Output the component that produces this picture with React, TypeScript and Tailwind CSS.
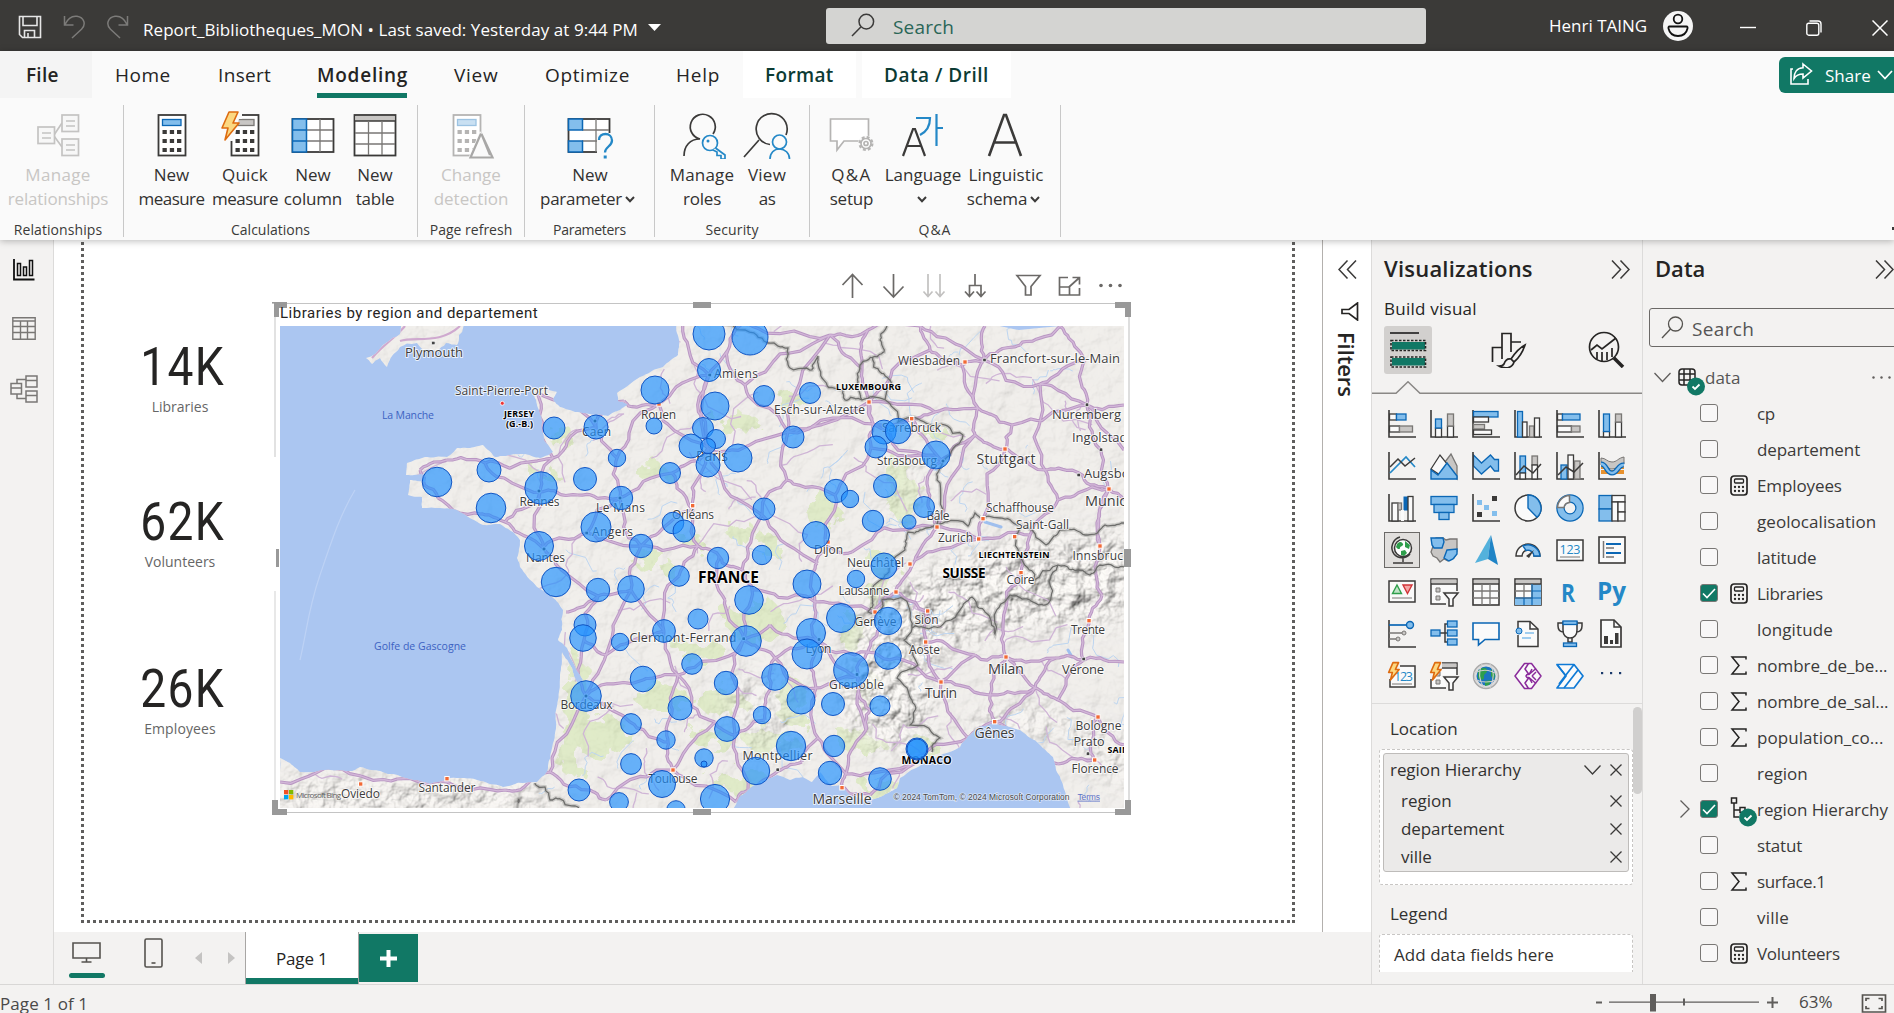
import React, { useLayoutEffect, useRef } from "react";

const DARK = "#3b3a39";
const BLUE = "#83beec";
const BLUE_LINE = "#0b67b5";
const GRAY = "#c8c6c4";
const GRAY_LINE = "#797775";
const GREEN = "#117865";

/* Text run that is tracked to an exact width. */
function Fit({ w, className = "", children }: { w: number; className?: string; children: string }) {
  const ref = useRef<HTMLSpanElement>(null);
  useLayoutEffect(() => {
    const el = ref.current;
    if (!el) return;
    el.style.letterSpacing = "0px";
    const natural = el.offsetWidth;
    el.style.letterSpacing = `${(w - natural) / children.length}px`;
  }, [w, children]);
  return (
    <span ref={ref} className={`inline-block whitespace-pre ${className}`}>
      {children}
    </span>
  );
}

/* ---------- title bar ---------- */

function TitleBar() {
  return (
    <header className="flex h-[51px] shrink-0 bg-[#3b3a38] text-white">
      <svg className="ml-[18px] mt-[15px] h-6 w-6 shrink-0" viewBox="0 0 24 24" fill="none" stroke="#e6e6e6" strokeWidth="1.6">
        <path d="M1.5 1.5h21v21H4.5l-3-3z" />
        <path d="M5 1.5v9h14v-9M6.500 22.500v-7h10v7M10 22v-4" />
      </svg>
      <svg className="ml-[21px] mt-[15px] h-6 w-6 shrink-0" viewBox="0 0 24 24" fill="none" stroke="#7c7b79" strokeWidth="1.500">
        <path d="M1.500 1v9h9M2 9.500C5 3 10 .8 14 1.300c7 1 9.500 8 4.500 13L9 23" />
      </svg>
      <svg className="ml-[20px] mt-[15px] h-6 w-6 shrink-0" viewBox="0 0 24 24" fill="none" stroke="#7c7b79" strokeWidth="1.500">
        <path d="M20.500 1v9h-9M20 9.500C17 3 12 .8 8 1.300c-7 1-9.500 8-4.500 13L13 23" />
      </svg>
      <div className="ml-[12px] mt-[18px] w-[496px] text-[17px] leading-6">
        <Fit w={495}>Report_Bibliotheques_MON • Last saved: Yesterday at 9:44 PM</Fit>
      </div>
      <svg className="ml-[9px] mt-[24px] h-[7px] w-[13px] shrink-0" viewBox="0 0 13 7"><path d="M0 0h13L6.500 7z" fill="#fff" /></svg>
      <div className="ml-[165px] mt-[8px] flex h-9 w-[600px] rounded-[3px] bg-[#d4d4d2]">
        <svg className="ml-[25px] mt-[5px] h-6 w-6" viewBox="0 0 24 24" fill="none" stroke="#3b3a39" strokeWidth="1.500">
          <circle cx="15.300" cy="8.600" r="7.300" /><path d="M9.800 14 1 23" />
        </svg>
        <div className="ml-[18px] mt-[7px] text-[19px] leading-6 text-[#2a6657]"><Fit w={61}>Search</Fit></div>
      </div>
      <div className="ml-[123px] mt-[14px] w-[99px] text-[17px] leading-6"><Fit w={98}>Henri TAING</Fit></div>
      <svg className="ml-[15px] mt-[11px] h-[30px] w-[30px]" viewBox="0 0 30 30" fill="none" stroke="#111" strokeWidth="1.800">
        <circle cx="15" cy="15" r="15" fill="#f5f5f5" stroke="none" />
        <circle cx="15" cy="8" r="4.300" /><path d="M6.500 15.500h17c1 0 1.200 1 1 2-1 4.500-4.500 7.500-9.500 7.500s-8.500-3-9.500-7.500c-.2-1 0-2 1-2z" />
      </svg>
      <svg className="ml-[47px] mt-[20px] h-4 w-4" viewBox="0 0 16 16"><path d="M0 7.500h16" stroke="#fff" strokeWidth="1.400" /></svg>
      <svg className="ml-[50px] mt-[20px] h-4 w-4" viewBox="0 0 16 16" fill="none" stroke="#fff" strokeWidth="1.400">
        <rect x=".8" y="3.200" width="12" height="12" rx="2" /><path d="M3.500 1h8.500a3 3 0 0 1 3 3v8.500" />
      </svg>
      <svg className="ml-[50px] mt-[20px] h-4 w-4" viewBox="0 0 16 16"><path d="m.5.5 15 15m0-15-15 15" stroke="#fff" strokeWidth="1.500" /></svg>
    </header>
  );
}

/* ---------- ribbon ---------- */

function RibbonTabs() {
  const tab = "shrink-0 text-[19px] leading-[49px] text-[#252423]";
  return (
    <nav className="flex h-[47px]">
      <div className={`${tab} w-[92px] bg-[#f4f4f4] pl-[26px] font-semibold`}><Fit w={33}>File</Fit></div>
      <div className={`${tab} w-[103px] pl-[23px]`}><Fit w={56}>Home</Fit></div>
      <div className={`${tab} w-[122px] pl-[23px]`}><Fit w={53}>Insert</Fit></div>
      <div className="w-[90px] shrink-0 border-b-[5px] border-[#117865] text-[19px] font-semibold leading-[49px] text-[#252423]"><Fit w={91}>Modeling</Fit></div>
      <div className={`${tab} w-[138px] pl-[47px]`}><Fit w={45}>View</Fit></div>
      <div className={`${tab} w-[131px]`}><Fit w={85}>Optimize</Fit></div>
      <div className={`${tab} w-[67px]`}><Fit w={44}>Help</Fit></div>
      <div className="w-[113px] shrink-0 bg-white pl-[22px] text-[19px] font-semibold leading-[49px] text-[#0c3b34]"><Fit w={69}>Format</Fit></div>
      <div className="ml-[6px] w-[149px] shrink-0 bg-white pl-[22px] text-[19px] font-semibold leading-[49px] text-[#0c3b34]"><Fit w={105}>Data / Drill</Fit></div>
      <div className="ml-[768px] mt-[6px] flex h-9 w-[115px] shrink-0 rounded-l-md bg-[#117865] text-white">
        <svg className="ml-[10px] mt-[5px] h-6 w-6 shrink-0" viewBox="0 0 24 24" fill="none" stroke="#fff" strokeWidth="1.600">
          <path d="M4 7H2v15h17v-5M14 2l8.500 7L14 16v-4c-4 0-7 1.500-9 4.500 0-6 3-10.500 9-10.800z" />
        </svg>
        <div className="ml-[12px] mt-[7px] shrink-0 text-[17px] leading-6"><Fit w={46}>Share</Fit></div>
        <svg className="ml-[6px] mt-[13px] h-[10px] w-[16px] shrink-0" viewBox="0 0 16 10" fill="none" stroke="#fff" strokeWidth="1.700"><path d="m1 1 7 7.500L15 1" /></svg>
      </div>
    </nav>
  );
}

function Chev() {
  return <svg className="ml-[3px] mr-[5px] inline-block h-[7px] w-[10px]" viewBox="0 0 10 7" fill="none" stroke="#3b3a39" strokeWidth="2"><path d="m1 1 4 4.200L9 1" /></svg>;
}

function CalcIcon({ faded = false, dx = 0, gray = false }: { faded?: boolean; dx?: number; gray?: boolean }) {
  const d = faded ? "#b5b4b3" : DARK;
  return (
    <g transform={`translate(${dx} 0)`}>
      <rect x="10.500" y="4" width="27" height="40.500" fill="#fff" stroke={d} strokeWidth="1.800" />
      <rect x="14.500" y="8.500" width="18.500" height="6" fill={gray ? GRAY : faded ? "#c9e0f2" : BLUE} stroke={gray ? GRAY_LINE : faded ? "#9cc3e2" : BLUE_LINE} strokeWidth="1.300" />
      {[19, 28, 37].map((y) => [14.5, 21.8, 29].map((x) => <rect key={`${x}${y}`} x={x} y={y} width="4.300" height="4" fill={d} />))}
    </g>
  );
}

function Bolt({ s = 1 }: { s?: number }) {
  return <path transform={`scale(${s})`} d="M8 1h9l-5 11h6L4 29l3-12H1z" fill="#fcd881" stroke="#dd6b10" strokeWidth={1.6 / s} strokeLinejoin="round" />;
}

type Btn = { width: string; icon: React.ReactNode; a: [string, number]; b?: [string, number]; chev?: boolean; off?: boolean };

const groups: { width: string; label: [string, number]; pad: string; labelPad?: string; buttons: Btn[] }[] = [
  {
    width: "w-[123px]", label: ["Relationships", 88], pad: "pl-[3px]", labelPad: "pr-[7px]",
    buttons: [{
      width: "w-[110px]", off: true, a: ["Manage", 65], b: ["relationships", 101],
      icon: <g fill="#f7f7f7" stroke="#c4c3c2" strokeWidth="1.700">
        <path d="M20 24 28 12M20 25l8 11" /><rect x="4" y="16" width="16.500" height="16.500" /><rect x="28" y="4" width="16.500" height="16.500" /><rect x="28" y="28" width="16.500" height="16.500" />
        <path d="M8 22h9M8 27h9M32 10h9M32 15h9M32 34h9M32 39h9" /></g>,
    }],
  },
  {
    width: "w-[293px]", label: ["Calculations", 79], pad: "pl-[11px]",
    buttons: [
      { width: "w-[73px]", a: ["New", 36], b: ["measure", 66], icon: <CalcIcon /> },
      { width: "w-[74px]", a: ["Quick", 46], b: ["measure", 66], icon: <><CalcIcon dx={0} gray /><path d="M9 0h12v8h-3l-6 22H6V18z" fill="#fafafa" /><Bolt /></> },
      {
        width: "w-[62px]", a: ["New", 36], b: ["column", 58],
        icon: <g fill="none"><rect x="3.500" y="8" width="41" height="33" fill="#fff" stroke={DARK} strokeWidth="1.800" /><path d="M17 19h27M17 30h27M31 8v33" stroke={GRAY_LINE} strokeWidth="1.300" /><rect x="3.500" y="8" width="14" height="33" fill={BLUE} /><path d="M3.500 8h14v33h-14zM3.500 19h14M3.500 30h14" stroke={BLUE_LINE} strokeWidth="1.500" /></g>,
      },
      {
        width: "w-[62px]", a: ["New", 36], b: ["table", 39],
        icon: <g fill="none"><rect x="3.500" y="4" width="41" height="40.500" fill="#fff" stroke={DARK} strokeWidth="1.800" /><rect x="4.300" y="5" width="39.400" height="5" fill={GRAY} /><path d="M4 10h40" stroke={DARK} strokeWidth="1.500" /><path d="M4 22h40M4 33h40M17.500 10v34M31 10v34" stroke={GRAY_LINE} strokeWidth="1.300" /></g>,
      },
    ],
  },
  {
    width: "w-[106px]", label: ["Page refresh", 82], pad: "pl-[9px]",
    buttons: [{ width: "w-[88px]", off: true, a: ["Change", 60], b: ["detection", 75], icon: <><CalcIcon faded dx={-4} /><path d="M33 20 21 48h27z" fill="#fafafa" /><path d="M34 22.500 23.500 46.500h22L34.500 23l8.500 21" fill="#fafafa" stroke="#a8a7a6" strokeWidth="2.200" /></> }],
  },
  {
    width: "w-[129px]", label: ["Parameters", 73], pad: "pl-[11px]",
    buttons: [{
      width: "w-[108px]", chev: true, a: ["New", 36], b: ["parameter", 82],
      icon: <g fill="none"><rect x="2.500" y="8" width="41" height="33" fill="#fff" stroke={DARK} strokeWidth="1.800" /><path d="M16 19h27M16 30h27M30 8v33" stroke={GRAY_LINE} strokeWidth="1.300" /><path d="M2.500 8h14v11h-14zM2.500 30h14v11h-14z" fill={BLUE} stroke={BLUE_LINE} strokeWidth="1.500" /><path d="M31 22h18v26H31z" fill="#fafafa" /><path d="M33 29c0-4 3-6 6.500-6s6.500 2.500 6.500 6.500c0 6-7 6-7 12" stroke="#2488c7" strokeWidth="2.300" /><rect x="37.700" y="44.500" width="3" height="3" fill="#2488c7" /></g>,
    }],
  },
  {
    width: "w-[154px]", label: ["Security", 53], pad: "pl-[10px]",
    buttons: [
      {
        width: "w-[74px]", a: ["Manage", 64], b: ["roles", 38],
        icon: <g fill="none" strokeWidth="1.700"><path d="M35 23A12.500 12.500 0 1 0 22 28C12 28 6 35 6 45" stroke={DARK} /><circle cx="32" cy="32" r="7.500" fill="#fafafa" stroke="#2488c7" /><path d="m37.500 37 9.500 7v4h-4v-3.500h-4V41l-4-2" stroke="#2488c7" fill="#fafafa" /><circle cx="30" cy="30" r="1.500" fill="#2488c7" /></g>,
      },
      {
        width: "w-[56px]", a: ["View", 38], b: ["as", 17],
        icon: <g fill="none" strokeWidth="1.700"><path d="M43 24A15.500 15.500 0 1 0 27 33.500M16 29 1 46" stroke={DARK} /><circle cx="36.500" cy="31" r="7" fill="#fafafa" stroke="#2488c7" /><path d="M27 48c0-6 4-10 9.500-10S46.500 42 46.500 48" stroke="#2488c7" /></g>,
      },
    ],
  },
  {
    width: "w-[250px]", label: ["Q&A", 33], pad: "pl-[13px]",
    buttons: [
      {
        width: "w-[57px]", a: ["Q&A", 40], b: ["setup", 44],
        icon: <g fill="#fff" stroke="#b5b4b3" strokeWidth="1.700"><path d="M2.500 8h38v22H16l-7 9v-9H2.500z" /><circle cx="38" cy="32.500" r="8" fill="#fafafa" stroke="none" /><circle cx="38" cy="32.500" r="6" strokeWidth="3" strokeDasharray="2.700 2" /><circle cx="38" cy="32.500" r="5" /><circle cx="38" cy="32.500" r="2" /></g>,
      },
      {
        width: "w-[86px]", chev: true, a: ["Language", 77],
        icon: <g fill="none"><path d="m4 45 10-27h2l10 27M8 35h14" stroke={DARK} strokeWidth="2.200" /><path d="M17 7h14c0 8-4 14-10 17M37.500 3v32M37.500 17H44" stroke="#2488c7" strokeWidth="2.200" /></g>,
      },
      {
        width: "w-[80px]", chev: true, a: ["Linguistic", 75], b: ["schema", 60],
        icon: <g fill="none" stroke={DARK} strokeWidth="2.600"><path d="M7 45 22 4h2l15 41M12.500 31.500h21" /></g>,
      },
    ],
  },
];

function Ribbon() {
  return (
    <div className="relative z-10 h-[189px] shrink-0 bg-[#fafafa] shadow-[0_1px_7px_rgba(0,0,0,0.28)]">
      <RibbonTabs />
      <div className="flex h-[142px]">
        {groups.map((g) => (
          <React.Fragment key={g.label[0]}>
            <div className={`${g.width} flex shrink-0 flex-col`}>
              <div className={`flex h-[122px] pt-[13px] ${g.pad}`}>
                {g.buttons.map((b, i) => (
                  <div key={i} className={`${b.width} flex shrink-0 flex-col items-center text-[17px] leading-6 ${b.off ? "text-[#c8c6c4]" : "text-[#323130]"}`}>
                    <svg className="mb-[4px] h-12 w-[50px] shrink-0" viewBox="-1 0 50 48">{b.icon}</svg>
                    <Fit w={b.a[1]}>{b.a[0]}</Fit>
                    <div className="flex h-6 items-center">
                      {b.b && <Fit w={b.b[1]}>{b.b[0]}</Fit>}
                      {b.chev && <Chev />}
                    </div>
                  </div>
                ))}
              </div>
              <div className={`text-center text-[14px] leading-[19px] text-[#3b3a39] ${g.labelPad ?? ""}`}><Fit w={g.label[1]}>{g.label[0]}</Fit></div>
            </div>
            <div className="mt-[7px] h-[132px] w-px shrink-0 bg-[#c8c8c8]" />
          </React.Fragment>
        ))}
        <div className="ml-auto mt-[129px] h-[3px] w-[2px] bg-[#3b3a39]" />
      </div>
    </div>
  );
}

/* ---------- left rail ---------- */

function LeftRail() {
  return (
    <aside className="w-[54px] shrink-0 border-r border-[#dcdbda] bg-[#f3f2f1]">
      <svg className="ml-[13px] mt-[19px] h-[22px] w-[22px]" viewBox="0 0 22 22" fill="none" stroke="#111" strokeWidth="1.500">
        <path d="M1 0v20.500h20.500" strokeWidth="1.800" /><rect x="4.500" y="4.500" width="3" height="12" /><rect x="10.500" y="8" width="3" height="8.500" /><rect x="16.500" y="1.500" width="3" height="15" />
      </svg>
      <svg className="ml-[12px] mt-[36px] h-6 w-6" viewBox="0 0 24 24" fill="none" stroke="#797775" strokeWidth="1.400">
        <path d="M.8.8h22.400v21.400H.8zM1 4h22M1 9.500h22M1 15.500h22M8.500 4v18M15.500 4v18" />
      </svg>
      <svg className="ml-[10px] mt-[34px] h-7 w-7" viewBox="0 0 28 28" fill="none" stroke="#797775" strokeWidth="1.500">
        <path d="M1 8.500h10.500V19H1zM1 13h10M16 1h11v11H16zM16 5.500h11M16 16h11v11H16zM16 20.500h11M7 8.500V4.500h9M7 19v4.500h9" />
      </svg>
    </aside>
  );
}

/* ---------- map ---------- */

type P = [number, number];

const C: Record<string, P> = {
  paris: [708, 448], lille: [744, 322], calais: [682, 322], amiens: [709, 375], rouen: [659, 404], havre: [624, 401], caen: [596, 427], rennes: [540, 492],
  nantes: [543, 548], lemans: [620, 498], angers: [587, 533], tours: [641, 546], orleans: [693, 510], brest: [420, 470], quimper: [438, 498],
  lorient: [480, 514], vannes: [505, 522], brieuc: [485, 463], morlaix: [447, 460], avranches: [553, 458], laval: [578, 495], chartres: [672, 473], alencon: [617, 458], poitiers: [631, 590],
  niort: [598, 596], rochelle: [566, 612], saintes: [584, 640], bordeaux: [586, 696], bayonne: [550, 772], pau: [588, 790], tarbes: [606, 800],
  toulouse: [673, 770], montauban: [668, 742], agen: [630, 722], cahors: [672, 712], brive: [678, 675], limoges: [664, 631], chatx: [679, 576],
  vierzon: [698, 546], bourges: [719, 556], clermont: [744, 639], perigueux: [643, 680], stetienne: [775, 658], roanne: [770, 625], lyon: [817, 640], macon: [815, 602],
  beaune: [817, 563], dijon: [828, 547], auxerre: [762, 515], troyes: [787, 480], reims: [788, 432], arras: [728, 350], quentin: [745, 385], metz: [873, 424], nancy: [871, 448], chaumont: [835, 495],
  strasb: [941, 460], colmar: [928, 488], bale: [937, 527], besancon: [852, 552], geneve: [875, 612], annecy: [880, 628], chambery: [868, 652],
  grenoble: [857, 676], valence: [816, 688], orange: [818, 738], nimes: [802, 762], montp: [778, 771], narbonne: [736, 802], marseille: [842, 786],
  aix: [846, 774], toulon: [870, 795], nice: [917, 762], sisteron: [866, 730], gap: [870, 710], savona: [968, 738], genes: [995, 722], turin: [941, 682], milan: [1006, 657], tortona: [990, 695], piacenza: [1035, 688],
  parma: [1058, 700], bologne: [1098, 717], florence: [1094, 760], livorno: [1058, 764], rimini: [1124, 745], verone: [1084, 660], brescia: [1056, 658], trente: [1089, 621], bolzano: [1102, 595],
  innsb: [1100, 546], munich: [1109, 489], augsb: [1079, 473], ulm: [1045, 470], stuttgart: [1005, 449], karls: [975, 435], mann: [978, 408],
  francf: [984, 360], mainz: [962, 365], wurz: [1040, 384], nurem: [1087, 405], kaisers: [935, 412], sarre: [912, 419], lux: [869, 402],
  liege: [868, 330], namur: [830, 335], bastogne: [862, 368], koln: [920, 326], koblenz: [930, 350], zurich: [979, 539], berne: [915, 560], lausanne: [896, 592], sion: [928, 611],
  aoste: [926, 642], novara: [975, 655], bregenz: [1030, 535], coire: [1021, 572], lugano: [1003, 625], memm: [1058, 500], padoue: [1124, 662],
  ingol: [1101, 450], east1: [1124, 405], east2: [1124, 500], east3: [1124, 450], schaff: [983, 519], rodez: [715, 722], beziers: [748, 790], millau: [735, 735], puy: [770, 690], montlucon: [725, 600], moulins: [752, 590],
  nevers: [742, 570], cherb: [537, 392], oviedo: [361, 776], gijon: [364, 768], sant: [447, 782], bilbao: [505, 790], w: [280, 782], ang: [606, 655], mende: [765, 720], heil: [1012, 425], saale: [1060, 326], bamberg: [1085, 360], north1: [985, 326], fulda: [1020, 345],
};

const roads = `calais-amiens amiens-rouen lille-arras arras-quentin arras-paris quentin-reims amiens-paris rouen-paris havre-rouen caen-havre caen-avranches avranches-rennes avranches-brieuc brieuc-morlaix morlaix-brest brest-quimper quimper-lorient lorient-vannes vannes-nantes rennes-brieuc rennes-vannes rennes-nantes rennes-laval laval-lemans lemans-chartres chartres-paris lemans-alencon alencon-caen alencon-rouen lemans-tours lemans-angers angers-nantes angers-tours tours-orleans orleans-paris orleans-chartres tours-poitiers poitiers-niort niort-rochelle niort-saintes niort-nantes saintes-bordeaux bordeaux-bayonne bordeaux-agen agen-montauban montauban-toulouse bayonne-pau pau-tarbes tarbes-toulouse toulouse-narbonne montauban-cahors cahors-brive brive-limoges limoges-chatx chatx-vierzon vierzon-orleans vierzon-bourges bourges-montlucon montlucon-clermont tours-vierzon limoges-poitiers bordeaux-perigueux perigueux-brive brive-clermont clermont-roanne clermont-stetienne stetienne-lyon roanne-lyon lyon-macon macon-beaune beaune-dijon beaune-auxerre auxerre-paris auxerre-troyes troyes-reims troyes-chaumont chaumont-dijon paris-reims reims-metz metz-nancy nancy-chaumont metz-strasb strasb-colmar colmar-bale nancy-strasb dijon-besancon besancon-bale macon-geneve geneve-annecy annecy-chambery chambery-lyon chambery-grenoble grenoble-lyon grenoble-valence lyon-valence valence-orange orange-nimes nimes-montp montp-beziers beziers-narbonne orange-aix aix-marseille aix-nice marseille-toulon toulon-nice aix-sisteron sisteron-gap gap-grenoble nice-savona savona-genes savona-turin genes-tortona tortona-milan tortona-turin tortona-piacenza turin-novara novara-milan milan-piacenza piacenza-parma parma-bologne bologne-florence florence-livorno livorno-genes bologne-rimini milan-brescia brescia-verone verone-trente trente-bolzano bolzano-innsb innsb-munich verone-padoue verone-parma brescia-piacenza munich-augsb augsb-ulm ulm-stuttgart stuttgart-karls karls-mann mann-francf mann-heil heil-stuttgart heil-nurem francf-wurz wurz-nurem nurem-ingol ingol-munich wurz-ulm ulm-memm memm-munich memm-bregenz bregenz-coire coire-lugano lugano-milan bregenz-zurich zurich-schaff schaff-stuttgart zurich-bale zurich-berne bale-berne berne-lausanne lausanne-geneve lausanne-sion sion-aoste aoste-turin chambery-turin mainz-francf mainz-mann mainz-koblenz koblenz-koln koblenz-lux mann-kaisers kaisers-sarre sarre-metz sarre-strasb karls-strasb karls-bale lux-metz lux-bastogne bastogne-liege bastogne-namur namur-liege liege-koln koln-francf namur-reims lille-namur nurem-east1 munich-east2 munich-innsb wurz-bamberg bamberg-nurem bamberg-saale francf-fulda francf-north1 fulda-saale clermont-millau millau-beziers rodez-toulouse rodez-millau rodez-brive stetienne-puy puy-mende mende-millau nevers-bourges nevers-moulins moulins-clermont moulins-macon nevers-auxerre cherb-avranches w-oviedo oviedo-sant sant-bilbao bilbao-bayonne saintes-ang ang-limoges ang-poitiers ang-bordeaux caen-cherb lux-kaisers metz-lux reims-lux grenoble-sisteron quentin-namur nurem-east3 genes-piacenza valence-stetienne aoste-novara`.split(" ");

function rng(seed: number) {
  let s = seed;
  return () => {
    s = (s * 16807) % 2147483647;
    return s / 2147483647 - 0.5;
  };
}

/* Breaks each straight segment into a wandering line. */
function wander(pts: P[], amount: number, seed: number, depth = 3): P[] {
  const r = rng(seed);
  let out = pts;
  for (let d = 0; d < depth; d++) {
    const next: P[] = [];
    for (let i = 0; i < out.length - 1; i++) {
      const [x1, y1] = out[i];
      const [x2, y2] = out[i + 1];
      const k = Math.hypot(x2 - x1, y2 - y1) * amount;
      next.push(out[i], [(x1 + x2) / 2 + r() * k, (y1 + y2) / 2 + r() * k]);
    }
    next.push(out[out.length - 1]);
    out = next;
  }
  return out;
}

const toPath = (pts: P[]) => "M" + pts.map((p) => `${p[0].toFixed(1)} ${p[1].toFixed(1)}`).join("L");

const roadPath = roads.map((r, i) => {
  const [a, b] = r.split("-");
  return toPath(wander([C[a], C[b]], 0.28, 77 + i * 131));
}).join("");

const minorPath = (() => {
  const r = rng(991);
  let d = "";
  for (let i = 0; i < 85; i++) {
    const x = 700 + r() * 800;
    const y = 567 + r() * 480;
    d += toPath(wander([[x, y], [x + r() * 130, y + r() * 110]], 0.4, 13 + i * 57));
  }
  return d;
})();

const riverPath = (() => {
  const r = rng(4242);
  let d = "";
  for (let i = 0; i < 95; i++) {
    const x = 830 + r() * 590;
    const y = 560 + r() * 470;
    d += toPath(wander([[x, y], [x + r() * 70, y + r() * 70]], 0.6, 29 + i * 91));
  }
  return d;
})();

const mainland: P[] = [
  [676, 320], [679, 340], [678, 355], [663, 367], [640, 377], [617, 393], [618, 401], [628, 404], [620, 410], [608, 416], [597, 415], [575, 412], [560, 407], [553, 400], [557, 392], [545, 389], [532, 387], [537, 405], [542, 420], [544, 440], [553, 452], [540, 458],
  [525, 454], [510, 455], [495, 457], [483, 445], [470, 448], [457, 448], [447, 457], [425, 457], [407, 463], [406, 475], [424, 474], [425, 482], [410, 480], [408, 495], [422, 497], [422, 508], [440, 508], [457, 510], [483, 525], [500, 524], [513, 532], [520, 540], [517, 558], [520, 567],
  [537, 587], [552, 597], [563, 610], [562, 630], [558, 640], [567, 648], [583, 680], [578, 685], [572, 668], [562, 652], [560, 675], [558, 700], [556, 722], [553, 743], [547, 772], [537, 782], [503, 787], [477, 780], [450, 778], [430, 784], [413, 780], [380, 771], [360, 767], [352, 771], [300, 772], [290, 763], [280, 758],
  [270, 820], [730, 820], [735, 806], [740, 796], [750, 788], [777, 775], [790, 780], [803, 777], [812, 782], [820, 772], [832, 786], [840, 785], [850, 795], [865, 800], [877, 798], [890, 792], [897, 788], [900, 778], [930, 760], [960, 747], [977, 728], [995, 723], [1020, 730], [1040, 745], [1053, 757], [1056, 770], [1063, 785], [1072, 812],
  [1140, 820], [1140, 320], [676, 320],
];
const england: P[] = [[405, 320], [400, 334], [383, 345], [366, 358], [372, 364], [380, 358], [387, 367], [392, 356], [400, 347], [417, 343], [423, 350], [437, 352], [446, 343], [457, 345], [459, 335], [466, 320], [405, 320]];
const mainlandPath = toPath(wander(mainland, 0.12, 5, 3)) + "z";
const englandPath = toPath(wander(england, 0.2, 9, 2)) + "z";

const borders: P[][] = [
  [[715, 320], [745, 330], [768, 343], [788, 348], [790, 368], [812, 370], [818, 356], [822, 378], [843, 390], [845, 400], [862, 400], [888, 402], [898, 422], [930, 425], [963, 435], [950, 455], [937, 480], [937, 525], [920, 530], [908, 532], [905, 550], [885, 575], [872, 592], [873, 605], [868, 612], [880, 613], [882, 600], [902, 598], [912, 628], [904, 640], [918, 665], [897, 678], [912, 700], [910, 725], [940, 738], [932, 752]],
  [[887, 326], [880, 340], [884, 352], [873, 357], [860, 365], [857, 385], [862, 400]], [[873, 357], [880, 372], [890, 380], [885, 400]],
  [[937, 525], [968, 526], [975, 513], [1000, 518], [1020, 525], [1046, 545], [1060, 530], [1085, 535], [1105, 525], [1124, 523]],
  [[912, 628], [940, 627], [960, 610], [972, 597], [985, 612], [995, 634], [1010, 595], [1030, 600], [1045, 605], [1050, 585], [1058, 565], [1078, 570], [1090, 575], [1100, 565], [1124, 567]],
  [[1020, 528], [1022, 560], [1035, 580], [1058, 565]],
  [[535, 783], [545, 787], [550, 800], [575, 806], [582, 812]],
];
const borderPath = borders.map((b, i) => toPath(wander(b, 0.35, 300 + i * 17, 3))).join("");

const greens: [number, number, number, number][] = [
  [575, 700, 10, 50], [600, 735, 28, 20], [568, 745, 12, 30], [900, 490, 14, 32], [735, 420, 22, 9], [650, 560, 18, 10], [700, 650, 25, 10], [740, 620, 16, 14], [765, 620, 16, 22], [660, 695, 30, 9], [720, 700, 25, 12], [770, 545, 10, 14], [820, 510, 12, 18],
  [880, 590, 10, 28], [850, 630, 10, 20], [870, 690, 12, 20], [790, 700, 16, 24], [770, 740, 26, 12], [740, 780, 30, 10], [860, 740, 24, 12], [880, 785, 20, 8], [920, 745, 16, 10], [540, 470, 14, 6], [560, 435, 10, 14], [690, 540, 12, 8], [930, 430, 16, 8], [740, 530, 16, 8], [650, 470, 16, 7], [790, 400, 14, 8], [880, 560, 16, 10], [710, 735, 22, 10],
];

const circles: [number, number, number][] = [
  [709, 334, 16], [709, 370, 11.5], [655, 390, 14], [715, 406, 14], [554, 428, 11], [596, 427, 12], [654, 426, 8], [703, 428, 10.5], [691, 446, 12], [617, 458, 8.7],
  [670, 473, 10.5], [708, 465, 12], [489, 470, 12], [437, 482, 14.8], [541, 488, 16.2], [491, 508, 14.8], [585, 479, 11.5], [621, 498, 11.7], [596, 527, 15], [539, 546, 14.5],
  [673, 523, 10.8], [684, 531, 11], [641, 546, 11.7], [750, 337, 18], [764, 396, 10.5], [810, 393, 10.5], [793, 437, 11], [738, 458, 14], [716, 439, 9.5], [708, 446, 7.5],
  [884, 432, 12], [898, 431, 12.7], [876, 447, 11], [936, 455, 14], [885, 486, 11.5], [836, 491, 11.7], [850, 499, 8.7], [764, 509, 11], [873, 521, 10.7], [909, 522, 7],
  [924, 507, 10.5], [816, 535, 13.5], [718, 558, 10.7], [762, 555, 9.7], [807, 584, 14], [884, 566, 13], [856, 579, 8.7], [749, 600, 14.3], [841, 618, 14.5], [888, 621, 13.7],
  [811, 633, 14.5], [807, 654, 15], [746, 641, 15.3], [888, 656, 13.3], [851, 670, 17.3], [726, 683, 11.7], [775, 677, 13.3], [801, 700, 14], [833, 704, 11.5], [880, 706, 10],
  [762, 715, 8.7], [727, 729, 12.4], [791, 746, 14.7], [834, 746, 10.7], [917, 749, 11], [917, 749, 10], [756, 771, 13.7], [830, 773, 11.7], [880, 779, 11.3], [715, 799, 14.6],
  [704, 758, 9.2], [704, 764, 3], [556, 582, 14.7], [598, 590, 11.7], [631, 589, 13.3], [679, 576, 10.3], [585, 625, 11], [583, 638, 13.3], [620, 642, 8.7], [664, 631, 11.4],
  [698, 619, 10], [692, 664, 10.3], [643, 679, 12.8], [586, 696, 15.3], [680, 708, 12], [631, 724, 10.4], [666, 740, 9.2], [631, 764, 10.4], [579, 790, 11], [619, 802, 9.4], [662, 784, 13.5], [676, 810, 9.3],
];

/* text, x, baseline, width, size */
const towns: [string, number, number, number, number][] = [
  ["Plymouth", 405, 357, 58, 13], ["Saint-Pierre-Port", 455, 394.7, 93, 12], ["Rouen", 641, 418.7, 35, 12], ["Caen", 582, 435.7, 29, 12], ["Paris", 696, 461, 32, 14], ["Rennes", 519.5, 505.7, 40, 12],
  ["Le Mans", 596, 511.7, 49, 12], ["Angers", 592, 536.3, 41, 12], ["Orléans", 672, 518.7, 42, 12], ["Nantes", 526, 562, 39, 12], ["Amiens", 714, 377.7, 44, 12], ["Esch-sur-Alzette", 774, 413.7, 91, 12],
  ["Wiesbaden", 898, 364.7, 62, 12], ["Francfort-sur-le-Main", 990, 362.7, 130, 13], ["Sarrebruck", 882, 432, 59, 12], ["Strasbourg", 877, 464.5, 60, 12], ["Nuremberg", 1052, 419, 69, 13], ["Ingolstadt", 1072, 441.7, 60, 13],
  ["Augsbourg", 1084, 477.7, 66, 13], ["Munich", 1085, 506, 50, 14.5], ["Stuttgart", 976.5, 464, 59, 14], ["Schaffhouse", 986, 512, 68, 12], ["Saint-Gall", 1016, 528.7, 53, 12], ["Bâle", 926.5, 519.7, 23, 12],
  ["Zurich", 938, 542, 35, 12], ["Dijon", 814, 554.3, 29, 12], ["Neuchâtel", 847, 566.7, 57, 12], ["Innsbruck", 1072.5, 560.3, 57, 12], ["Coire", 1006.5, 584, 28, 12], ["Lausanne", 838.5, 595, 51, 12],
  ["Genève", 854.5, 625.7, 42, 12], ["Sion", 914.5, 624, 24, 12], ["Aoste", 909, 653.7, 31, 12], ["Lyon", 805.5, 652.7, 26, 12.5], ["Clermont-Ferrand", 629.5, 642, 107, 12.5], ["Grenoble", 829, 688.7, 55, 12],
  ["Milan", 988, 674, 36, 14.5], ["Vérone", 1062, 673.7, 42, 13], ["Trente", 1071, 633.7, 34, 12], ["Turin", 925, 698, 32, 14], ["Gênes", 974.5, 738, 40, 14], ["Bologne", 1075.5, 730.3, 46, 12],
  ["Prato", 1073.5, 746, 31, 12.5], ["Florence", 1071.5, 773.3, 47, 12], ["Montpellier", 742.5, 760.3, 70, 12.5], ["Marseille", 812.5, 804, 59, 14], ["Toulouse", 648.5, 782.7, 49, 12], ["Bordeaux", 560.5, 709.3, 52, 12],
  ["Santander", 418.5, 792, 57, 12], ["Oviedo", 341, 798, 39, 12],
];
const countries: [string, number, number, number, number][] = [
  ["JERSEY", 504, 416.7, 30, 9], ["(G.-B.)", 506, 427, 27, 9], ["LUXEMBOURG", 836, 390, 65, 9], ["FRANCE", 698, 582.5, 61, 15.5], ["SUISSE", 942.5, 577.7, 43, 13.5],
  ["LIECHTENSTEIN", 978.5, 557.7, 71, 9], ["MONACO", 901.5, 764, 50, 10.5], ["SAINT", 1107.5, 752.5, 27, 9],
];
const capitals: P[] = [[659, 404], [692.7, 505.7], [869, 402], [965, 362], [911.7, 418.7], [1109, 489], [1005, 449], [983, 518.7], [1014.7, 536.7], [937, 527], [978.7, 539], [1100, 546], [910, 564], [1021, 572.7], [896, 592], [875, 612], [927.7, 611], [925.7, 642], [1006, 657], [1089, 620.7], [941, 682], [994.7, 721.7], [1098, 717], [1094.7, 760], [842, 787.7], [673, 770], [447, 778.7], [360.7, 784], [828, 542]];
const cities: P[] = [[433.3, 343], [586.7, 533], [709.7, 375], [984.5, 360], [1087, 404.7], [1101, 449.7], [1078.7, 475], [743.7, 638.7], [1083.7, 659], [1088, 753.7], [777.7, 769.7], [539, 491], [620, 498], [544, 549], [586, 696], [595, 421], [857, 674.5], [819, 639.5], [943, 461]];

function LibraryMap() {
  return (
    <svg className="absolute left-[8px] top-[24px] h-[482px] w-[844px]" viewBox="280 326 844 482">
      <defs>
        <clipPath id="land"><path d={mainlandPath} /><path d={englandPath} /></clipPath>
        <filter id="hills" x="0" y="0" width="100%" height="100%">
          <feTurbulence type="fractalNoise" baseFrequency="0.05" numOctaves="4" seed="6" result="n" />
          <feDiffuseLighting in="n" surfaceScale="9" diffuseConstant="1.120" lightingColor="#f4f2ef"><feDistantLight azimuth="225" elevation="58" /></feDiffuseLighting>
        </filter>
        <filter id="soft" x="-50%" y="-50%" width="200%" height="200%"><feGaussianBlur stdDeviation="12" /></filter>
        <filter id="mottle" x="-20%" y="-20%" width="140%" height="140%">
          <feTurbulence type="fractalNoise" baseFrequency="0.060" numOctaves="3" seed="3" result="t" />
          <feDisplacementMap in="SourceGraphic" in2="t" scale="34" />
        </filter>
        <mask id="alps">
          <rect x="280" y="326" width="844" height="482" fill="#1c1c1c" />
          <g filter="url(#soft)" fill="#fff">
            <path d="M870 600 930 570 990 550 1130 535 1130 615 1060 625 1000 630 950 645 925 670 930 720 900 750 850 730 845 680z" />
            <path d="M280 785h230l60 25H280z" /><path d="M990 745 960 720 1040 705 1130 750V790L1060 730z" opacity=".7" />
            <path d="M760 660 800 690 790 760 740 750 720 690z" opacity=".35" /><path d="M900 460 920 460 920 520 890 520z" opacity=".4" />
          </g>
        </mask>
      </defs>
      <rect x="280" y="326" width="844" height="482" fill="#abc6f1" />
      <path d="M355 490C340 515 332 540 320 575S307 630 300 660" stroke="#bdd2f5" strokeWidth="1.200" fill="none" />
      <g clipPath="url(#land)">
        <rect x="280" y="326" width="844" height="482" fill="#f0eeeb" />
        <g filter="url(#mottle)" fill="#d9e8bb" opacity=".8">
          {greens.map((g, i) => <ellipse key={i} cx={g[0] + 2} cy={g[1] + 2} rx={g[2]} ry={g[3]} />)}
        </g>
        <g mask="url(#alps)" opacity=".85"><rect x="280" y="326" width="844" height="482" filter="url(#hills)" /></g>
        <path d={riverPath} fill="none" stroke="#bdd5f0" strokeWidth="1" />
        <path d="M880 602c6-5 16-7 24-4M985 522l16 5M1068 650l4 7" fill="none" stroke="#9fbfee" strokeWidth="3" strokeLinecap="round" />
        <path d={minorPath} fill="none" stroke="#cfb5d6" strokeWidth="1.300" />
        <path d={roadPath} fill="none" stroke="#b996c3" strokeWidth="3.200" strokeLinejoin="round" />
        <path d={roadPath} fill="none" stroke="#d2b7d8" strokeWidth="1.300" strokeLinejoin="round" />
        <path d={borderPath} fill="none" stroke="#8a8a88" strokeOpacity=".35" strokeWidth="4" />
        <path d={borderPath} fill="none" stroke="#6e6e6c" strokeWidth="1.300" />
        <path d="M372 358C383 345 395 338 405 326M400 341C415 336 440 345 460 326" fill="none" stroke="#cfa9cf" strokeWidth="2.200" />
      </g>
      {cities.map((p, i) => <rect key={i} x={p[0] - 1.8} y={p[1] - 1.8} width="3.600" height="3.600" rx="1" fill="#444" stroke="#fff" strokeWidth=".8" />)}
      {capitals.map((p, i) => <rect key={i} x={p[0] - 2.2} y={p[1] - 2.2} width="4.400" height="4.400" fill="#f26a35" stroke="#fff" strokeWidth="1" />)}
      <circle cx="502.300" cy="403.300" r="2" fill="#e33" stroke="#fff" strokeWidth=".8" />
      <g fontFamily="'Open Sans', 'Noto Sans', sans-serif" stroke="#fff" strokeOpacity=".75" strokeWidth="2" paintOrder="stroke" strokeLinejoin="round">
        <g fill="#3d3d3d">{towns.map((t) => <text key={t[0]} x={t[1]} y={t[2]} textLength={t[3]} fontSize={t[4]}>{t[0]}</text>)}</g>
        <g fill="#000" fontWeight="700">{countries.map((t) => <text key={t[0]} x={t[1]} y={t[2]} textLength={t[3]} fontSize={t[4]}>{t[0]}</text>)}</g>
      </g>
      <g fontFamily="'Open Sans', 'Noto Sans', sans-serif" fill="#3c62c2" fontSize="10.500">
        <text x="382" y="419.300" textLength="52">La Manche</text>
        <text x="374" y="650" textLength="92">Golfe de Gascogne</text>
      </g>
      <g fill="#1e90ff" fillOpacity=".66" stroke="#1256c4" strokeWidth="1">
        {circles.map((c, i) => <circle key={i} cx={c[0]} cy={c[1]} r={c[2]} />)}
      </g>
      <path d="M284 790h4.300v4.300H284z" fill="#f25022" /><path d="M289 790h4.300v4.300H289z" fill="#7fba00" />
      <path d="M284 795h4.300v4.300H284z" fill="#00a4ef" /><path d="M289 795h4.300v4.300H289z" fill="#ffb900" />
      <text x="296" y="797.500" fontSize="8" textLength="45" fontFamily="'Open Sans', sans-serif" fill="#5f5f5f">Microsoft Bing</text>
      <g fontFamily="'Liberation Sans', Arial, sans-serif" fontSize="8.500">
        <text x="893.500" y="799.700" textLength="176" fill="#4a4a4a" stroke="#fff" strokeOpacity=".5" strokeWidth="1.500" paintOrder="stroke">© 2024 TomTom, © 2024 Microsoft Corporation</text>
        <text x="1077.500" y="799.700" textLength="22.500" fill="#5f74c8" textDecoration="underline">Terms</text>
      </g>
    </svg>
  );
}

/* ---------- report canvas ---------- */

function Kpi({ pos, value, label, w }: { pos: string; value: string; label: string; w: number }) {
  return (
    <div className={`absolute left-[29px] flex w-[140px] flex-col items-center ${pos}`}>
      <div className="ml-[6px] scale-x-[0.87] font-[Roboto] text-[53px] leading-[52px] tracking-[1.5px] text-[#252423]">{value}</div>
      <div className="mt-[4px] text-[14px] leading-5 text-[#666]"><Fit w={w}>{label}</Fit></div>
    </div>
  );
}

function VisualHeader() {
  return (
    <svg className="absolute left-[760px] top-[33px] h-[26px] w-[284px]" viewBox="841 273 284 26" fill="none" stroke="#6b6967" strokeWidth="1.700">
      <path d="M852.500 298v-23M842.500 285l10-10.500 10 10.500" />
      <path d="M893.500 274v23M883.500 286.500l10 10.500 10-10.500" />
      <path d="M928 274v22M923.500 291.500l4.500 5 4.500-5M940 274v22M935.500 291.500l4.500 5 4.500-5" stroke="#c2c1c0" />
      <path d="M975 274v12M969.500 296v-10.500h11.500V296M965 291.500l4.500 5 4.500-5M976.500 291.500l4.500 5 4.500-5" />
      <path d="M1017 275.500h23l-9 11v8.500h-5.500v-8.500z" />
      <path d="M1068 277.500h-8.500v17.500h20v-7M1059.500 287h10v8M1069 287l10-9M1072.500 277.500h7v7" />
      <g fill="#6b6967" stroke="none"><circle cx="1101" cy="285.500" r="1.800" /><circle cx="1110.500" cy="285.500" r="1.800" /><circle cx="1120" cy="285.500" r="1.800" /></g>
    </svg>
  );
}

function Canvas() {
  const h = "absolute bg-[#999]";
  return (
    <div className="flex h-[692px] w-[1268px] bg-white">
      <div className="relative ml-[27px] h-[683px] w-[1214px]">
        <div className="absolute left-0 top-[2px] h-[681px] w-[3px] bg-[repeating-linear-gradient(180deg,#5f5e5d_0_3px,transparent_3px_6px)]" />
        <div className="absolute right-0 top-[2px] h-[681px] w-[3px] bg-[repeating-linear-gradient(180deg,#5f5e5d_0_3px,transparent_3px_6px)]" />
        <div className="absolute bottom-0 left-0 h-[3px] w-full bg-[repeating-linear-gradient(90deg,#5f5e5d_0_3px,transparent_3px_6px)]" />
        <Kpi pos="top-[101px]" value="14K" label="Libraries" w={57} />
        <Kpi pos="top-[256px]" value="62K" label="Volunteers" w={71} />
        <Kpi pos="top-[423px]" value="26K" label="Employees" w={72} />
        <VisualHeader />
        <div className="absolute left-[191px] top-[62px] h-[513px] w-[859px]">
          <div className="absolute left-0 top-[1px] h-px w-full bg-[#c4c4c4]" />
          <div className="absolute bottom-[2px] left-0 h-px w-full bg-[#c4c4c4]" />
          <div className="absolute left-[2px] top-[15px] h-[140px] w-[2px] bg-[#e2e2e2]" />
          <div className="absolute bottom-[14px] left-[2px] h-[210px] w-[2px] bg-[#e8e8e8]" />
          <div className="absolute right-[1px] top-[15px] h-[484px] w-[2px] bg-[#dedede]" />
          <div className={`${h} left-0 top-0 h-px w-[15px]`} /><div className={`${h} left-[2px] top-[1px] h-[5px] w-[13px]`} /><div className={`${h} left-[2px] top-0 h-[15px] w-[5px]`} />
          <div className={`${h} right-0 top-0 h-[6px] w-[16px]`} /><div className={`${h} right-0 top-0 h-[15px] w-[6px]`} />
          <div className={`${h} bottom-0 left-0 h-[6px] w-[15px]`} /><div className={`${h} bottom-0 left-0 h-[15px] w-[6px]`} />
          <div className={`${h} bottom-0 right-0 h-[6px] w-[16px]`} /><div className={`${h} bottom-0 right-0 h-[15px] w-[6px]`} />
          <div className={`${h} left-[421px] top-0 h-[6px] w-[18px]`} /><div className={`${h} bottom-0 left-[421px] h-[6px] w-[18px]`} />
          <div className={`${h} left-[4px] top-[247px] h-[18px] w-[3px]`} /><div className={`${h} right-0 top-[247px] h-[18px] w-[7px]`} />
          <div className="absolute left-[8px] top-[2px] font-[Roboto] text-[15px] leading-[18px] text-[#252423]"><Fit w={258}>Libraries by region and departement</Fit></div>
          <LibraryMap />
        </div>
      </div>
    </div>
  );
}

function FiltersRail() {
  return (
    <div className="flex h-[692px] w-[49px] flex-col border-l border-[#b3b0ad] bg-white">
      <svg className="ml-[15px] mt-[20px] h-[19px] w-[19px]" viewBox="0 0 19 19" fill="none" stroke="#3b3a39" strokeWidth="1.500"><path d="m9.500.5-8.500 9 8.500 9M18 .5l-8.500 9 8.500 9" /></svg>
      <svg className="ml-[18px] mt-[23px] h-[19px] w-[18px]" viewBox="0 0 18 19" fill="none" stroke="#252423" strokeWidth="1.700"><path d="M16.500 1v17L8 11.500H1v-4h7z" /></svg>
      <div className="ml-[10px] mt-[11px] w-7 text-[22px] font-semibold leading-7 tracking-[-0.1px] text-[#252423] [writing-mode:vertical-rl]">Filters</div>
    </div>
  );
}

function PageTabs() {
  return (
    <div className="flex h-[52px] bg-[#f3f2f1]">
      <div className="ml-[15px] w-[36px] pt-[10px]">
        <svg className="ml-[3px] h-[21px] w-[29px]" viewBox="0 0 29 21" fill="none" stroke="#55534f" strokeWidth="1.600"><path d="M1 1h27v15H1zM14.500 16v4M9.500 20h10" /></svg>
        <div className="mt-[10px] h-[5px] rounded-full bg-[#117865]" />
      </div>
      <svg className="ml-[39px] mt-[6px] h-[30px] w-[19px]" viewBox="0 0 19 30" fill="none" stroke="#55534f" strokeWidth="1.600"><rect x="1" y="1" width="17" height="28" rx="1.500" /><path d="M7.500 25h4" /></svg>
      <svg className="ml-[32px] mt-[20px] h-3 w-[7px]" viewBox="0 0 7 12"><path d="M7 0v12L0 6z" fill="#c4c3c2" /></svg>
      <svg className="ml-[26px] mt-[20px] h-3 w-[7px]" viewBox="0 0 7 12"><path d="M0 0v12l7-6z" fill="#c4c3c2" /></svg>
      <div className="ml-[10px] w-[114px] border-x border-[#a8a6a4] bg-white">
        <div className="h-[46px] pl-[30px] pt-[15px] text-[17px] font-medium leading-6 text-[#252423]"><Fit w={52}>Page 1</Fit></div>
        <div className="h-[6px] bg-[#117865]" />
      </div>
      <div className="mt-[2px] flex h-12 w-[59px] items-center justify-center bg-[#117865]">
        <svg className="h-[17px] w-[17px]" viewBox="0 0 17 17"><path d="M8.500 0v17M0 8.500h17" stroke="#fff" strokeWidth="4" /></svg>
      </div>
    </div>
  );
}

/* ---------- visualizations pane ---------- */

const axis = <path d="M1 0v27h27" fill="none" stroke={DARK} strokeWidth="1.600" />;
const R = (x: number, y: number, w: number, h: number, k: "b" | "g" | "w") => (
  <rect key={`${x}-${y}`} x={x} y={y} width={w} height={h} fill={k === "b" ? BLUE : k === "g" ? GRAY : "#fafafa"} stroke={k === "b" ? BLUE_LINE : k === "g" ? GRAY_LINE : DARK} strokeWidth="1.300" />
);
const thin = { fill: "none", stroke: DARK, strokeWidth: 1.5 };
const funnel = <path d="M14 15h14l-5 6v7h-4v-7z" fill="#fafafa" stroke={DARK} strokeWidth="1.500" />;
const slicer = <><rect x="1" y="1" width="26" height="25" fill="#fafafa" stroke={DARK} strokeWidth="1.500" /><path d="M1.500 1.500h25V5h-25z" fill={GRAY} /><path d="M1 6h26" {...thin} /><path d="M6 10h4v4H6zM6 18h4v4H6z" fill={GRAY} stroke={GRAY_LINE} /><path d="M12 13h18v16H16v-7z" fill="#f3f2f1" />{funnel}</>;

const visuals: React.ReactNode[] = [
  <>{axis}{R(1.5, 4, 7, 6, "w")}{R(8.5, 4, 9.5, 6, "b")}{R(1.5, 16, 10, 6, "w")}{R(11.5, 16, 13, 6, "g")}</>,
  <>{axis}{R(5.5, 18, 6, 9, "w")}{R(5.5, 9, 6, 9, "b")}{R(17.5, 16, 6, 11, "w")}{R(17.5, 4, 6, 12, "g")}</>,
  <>{axis}{R(1.5, 1.5, 24.5, 5.5, "b")}{R(1.5, 7, 15, 5, "w")}{R(1.5, 14.5, 11, 4.5, "g")}{R(1.5, 20, 18, 4.5, "w")}</>,
  <>{axis}{R(3.5, 1.5, 5, 25.5, "b")}{R(8.5, 12, 4.5, 15, "w")}{R(15.5, 16, 4.5, 11, "g")}{R(20.5, 8, 5, 19, "w")}</>,
  <>{axis}{R(1.5, 4, 5, 6, "w")}{R(6.5, 4, 17.5, 6, "b")}{R(1.5, 16, 14, 6, "w")}{R(15.5, 16, 8.5, 6, "g")}</>,
  <>{axis}{R(5.5, 21.5, 6, 5.5, "w")}{R(5.5, 4, 6, 17.5, "b")}{R(17.5, 12, 6, 15, "w")}{R(17.5, 4, 6, 8, "g")}</>,
  <>{axis}<path d="M2 21 18 5l9 10" fill="none" stroke="#2488c7" strokeWidth="1.700" /><path d="m2 15 8-8 7 7L27 6" {...thin} /></>,
  <><path d="M12 14 21 2l6 12v13z" fill={GRAY} stroke={GRAY_LINE} strokeWidth="1.300" /><path d="M1 17 10 3l8 10-5 12z" fill="#fafafa" stroke={DARK} strokeWidth="1.300" /><path d="M1 27V18l7 5 9-12 10 13v3z" fill={BLUE} stroke={BLUE_LINE} strokeWidth="1.400" /></>,
  <><path d="m1.500 3 8 8 9-8 4 4.500h4V19h-4l-4-5-9 8-8-8z" fill={BLUE} stroke={BLUE_LINE} strokeWidth="1.300" />{axis}</>,
  <>{axis}{R(6, 4, 5.5, 17, "b")}{R(6, 21, 5.5, 6, "w")}{R(18, 4, 5.5, 9, "g")}{R(18, 13, 5.5, 14, "w")}<path d="m2 23 8-9 9 7 8-9" {...thin} /></>,
  <>{axis}{R(5, 13, 6, 14, "b")}{R(12, 3, 5.5, 24, "w")}{R(18.5, 9, 5.5, 18, "g")}<path d="m2 23 8-8 8 5 9-9" {...thin} /></>,
  <><path d="M3 15h23M3 20h23" stroke="#e8912d" strokeWidth="4" fill="none" /><path d="M3 6c5 0 6 4 11 4s6-4 12-5v7c-6 0-6 5-12 5S9 13 3 13z" fill={GRAY} stroke={GRAY_LINE} /><path d="M3 12c6 0 5 9 11 9s6-9 12-8" stroke={BLUE_LINE} strokeWidth="5" fill="none" /><path d="M3 12c6 0 5 9 11 9s6-9 12-8" stroke={BLUE} strokeWidth="2.500" fill="none" />{axis}</>,
  <>{axis}{R(4, 9, 6, 18, "w")}{R(10, 9, 3.5, 7, "g")}<path d="M15.500 2.500H20v14h-4.500z" fill={BLUE_LINE} /><path d="M13 16h3v11h-3z" fill="#fafafa" />{R(20, 2.5, 5, 24.5, "w")}</>,
  <>{R(1, 2.5, 26, 8, "b")}{R(4, 10.5, 20, 8, "b")}{R(9, 18.5, 10, 7, "b")}</>,
  <>{axis}<path d="M20 2h5v5h-5zM5 18h5v5H5z" fill={DARK} /><path d="M5 6h5v5H5zM12 11h5v5h-5zM20 17h5v5h-5z" fill={BLUE} /></>,
  <><circle cx="14" cy="14" r="13" fill="#fafafa" stroke={DARK} strokeWidth="1.500" /><path d="M14 14V1a13 13 0 0 1 9 22.300z" fill={BLUE} stroke={BLUE_LINE} strokeWidth="1.400" /></>,
  <><circle cx="14" cy="14" r="9.500" fill="none" stroke={BLUE_LINE} strokeWidth="8.500" /><circle cx="14" cy="14" r="9.500" fill="none" stroke={BLUE} strokeWidth="6" /><path d="M1.500 13.500A12.500 12.500 0 0 1 13.500 1.500v7a6 6 0 0 0-5.500 5z" fill="#fafafa" stroke={GRAY_LINE} strokeWidth="1.500" /></>,
  <>{R(1, 1.5, 13, 13.5, "b")}{R(1, 15, 13, 12, "b")}{R(14, 1.5, 13, 6.5, "w")}{R(14, 8, 6, 19, "w")}{R(20, 8, 7, 10, "w")}{R(20, 18, 7, 9, "w")}</>,
  <><circle cx="15" cy="12" r="8.500" fill="#fff" stroke={DARK} strokeWidth="1.500" /><path d="M9 8c3-3 5-2 6 0s-3 2-3 4-3 1-4-1zM17 5l5 4-1 4-4-2zM13 15l4-1 2 3-3 3-3-1z" fill="#2e9e4b" /><path d="M12 1A11 11 0 0 0 6 18c4 5 12 5 16 0M15 22v4M5 27h20" {...thin} /></>,
  <><path d="M6 2h7l3 2 4-1h7v12l-3 7-4 1-2 2-4-2-4 3-3-4-4-2-2-4z" fill={GRAY} stroke={GRAY_LINE} strokeWidth="1.300" /><path d="M1 2h12l1 4-2 6H4L2 9zM17 14l10-1v5l-4 5-4 2-5-3z" fill={BLUE} stroke={BLUE_LINE} strokeWidth="1.400" /></>,
  <><path d="M19 -1 3 27l13-4z" fill="#53b1dc" /><path d="M19 -1 16 23l10 6z" fill="#1f84c6" /></>,
  <><path d="M2 20a12 12 0 0 1 24 0h-6a6 6 0 0 0-12 0z" fill="#fafafa" stroke={DARK} strokeWidth="1.500" /><path d="M9 10a12 12 0 0 1 17 10h-6a6 6 0 0 0-8-5.500z" fill={BLUE} stroke={BLUE_LINE} strokeWidth="1.400" /><path d="m12 20 8-6-5 8z" fill={DARK} /></>,
  <><rect x="1" y="4" width="26" height="20.500" fill="#fafafa" stroke={DARK} strokeWidth="1.500" /><text x="3.500" y="17.500" fontSize="12.500" textLength="21" fill="#2488c7" fontFamily="'Open Sans', sans-serif">123</text><path d="M4 21h20" stroke={GRAY_LINE} /></>,
  <><rect x="1" y="1" width="26" height="26" fill="#fafafa" stroke={DARK} strokeWidth="1.600" /><path d="M5.500 5v17" stroke={GRAY_LINE} strokeWidth="1.500" /><path d="M8 8h15M8 17h15" stroke={BLUE_LINE} strokeWidth="2" /><path d="M8 12h8M8 21h8" stroke={GRAY_LINE} strokeWidth="1.500" /></>,
  <><rect x="1" y="3" width="26" height="21" fill="#fafafa" stroke={DARK} strokeWidth="1.500" /><path d="m9 7 4.500 8.500h-9z" fill="#bfe3c6" stroke="#2e9e4b" strokeWidth="1.400" /><path d="m19.500 15.500 4.500-8.500h-9z" fill="#f3a6a6" stroke="#d13438" strokeWidth="1.400" /><path d="M4 20h20" stroke={GRAY_LINE} /></>,
  slicer,
  <><rect x="1" y="1" width="26" height="26" fill="#fafafa" stroke={DARK} strokeWidth="1.600" /><path d="M1.800 1.800h24.400V5.500H1.800z" fill={GRAY} /><path d="M1 6h26" {...thin} /><path d="M1 13h26M1 20h26M10 6v21M18 6v21" stroke={GRAY_LINE} strokeWidth="1.300" /></>,
  <><rect x="1" y="1" width="26" height="26" fill="#fafafa" stroke={DARK} strokeWidth="1.600" /><path d="M1.800 1.800h24.400V5.500H1.800z" fill={GRAY} /><path d="M18 6h9v21H1v-7h17z" fill={BLUE} /><path d="M1 6h26" {...thin} /><path d="M1 13h17M10 6v14M1 20h17V6" fill="none" stroke={GRAY_LINE} strokeWidth="1.300" /><path d="M18 6v21M10 20v7M1 20h26M18 13h9" fill="none" stroke={BLUE_LINE} strokeWidth="1.200" /></>,
  <text x="5" y="23.500" fontSize="25" fontWeight="700" textLength="14" lengthAdjust="spacingAndGlyphs" fill="#2488c7" fontFamily="'Open Sans', sans-serif">R</text>,
  <text x="-1" y="21.500" fontSize="25" fontWeight="700" textLength="29" lengthAdjust="spacingAndGlyphs" fill="#2488c7" fontFamily="'Open Sans', sans-serif">Py</text>,
  <>{axis}<path d="M1 5h18" stroke={BLUE_LINE} strokeWidth="1.700" /><circle cx="22" cy="5" r="3.500" fill={BLUE} stroke={BLUE_LINE} strokeWidth="1.400" /><path d="M1 13h13M1 19h8" stroke={GRAY_LINE} strokeWidth="1.700" /><circle cx="16" cy="13" r="2" fill={GRAY} stroke={GRAY_LINE} /><circle cx="10" cy="19" r="2" fill={GRAY} stroke={GRAY_LINE} /></>,
  <><path d="M10 13h7M17 4h-2v18h2" {...thin} />{R(1, 10, 9, 6, "b")}{R(17.5, 1, 9.5, 6, "b")}{R(17.5, 10, 9.5, 6, "b")}{R(17.5, 19, 9.5, 6, "b")}</>,
  <path d="M1 3h26v16.500H13L6.500 25v-5.500H1z" fill="#fafafa" stroke={BLUE_LINE} strokeWidth="1.600" />,
  <><path d="M4 8V1.500h12L24 9v17.500H4V15" fill="#fafafa" stroke={DARK} strokeWidth="1.500" /><path d="M16 1.500V9h8" {...thin} /><circle cx="5" cy="11" r="3" fill={BLUE} stroke={BLUE_LINE} /><path d="M11 13h9M8 18h9" stroke={BLUE} strokeWidth="1.500" /></>,
  <><path d="M7 3H2v3c0 4 2 6 6 6M21 3h5v3c0 4-2 6-6 6" {...thin} /><path d="M7 2h14v8c0 5-3 8-7 8s-7-3-7-8z" fill="#fafafa" stroke={DARK} strokeWidth="1.500" /><path d="M12 18v4h4v-4" {...thin} />{R(7, 1, 14, 3.5, "b")}{R(7.5, 23, 13, 3.5, "b")}</>,
  <><path d="M3 0h13l7 7v20H3z" fill="#fafafa" stroke={DARK} strokeWidth="1.700" /><path d="M16 0v7h7" {...thin} /><path d="M6 16h4v8H6zM12 20h3v4h-3zM17 13h3.500v11H17z" fill={DARK} /></>,
  <><rect x="2" y="4" width="25" height="21" fill="#fafafa" stroke={DARK} strokeWidth="1.500" /><text x="6" y="18.500" fontSize="12.500" textLength="19" fill="#2488c7" fontFamily="'Open Sans', sans-serif">123</text><path d="M4 22h20" stroke={GRAY_LINE} /><path d="M0 0h12v6L5 17H0z" fill="#f3f2f1" /><Bolt s={0.62} /></>,
  <>{slicer}<path d="M0 0h12v6L5 17H0z" fill="#f3f2f1" /><Bolt s={0.62} /></>,
  <><circle cx="14" cy="14" r="12.500" fill="#ddd" stroke="#aaa" strokeWidth="1.500" /><circle cx="14" cy="14" r="9.500" fill="#1b74bf" /><path d="M6 9c4-4 8-4 9-1s-4 4-3 7-4 4-6 1zM19 7l4 5-1 6-3-4zM13 19l6-1-2 5-4 1z" fill="#2e9e4b" /><path d="M2 11c8-4 16-4 24 2M2 17c8 4 16 4 24 0M10 2c-4 8-3 16 2 24M18 2c5 8 4 16 0 24" fill="none" stroke="#cfcfcf" strokeWidth="1.100" /></>,
  <g fill="#fafafa" stroke="#8a2b9b" strokeWidth="1.500" strokeLinejoin="round"><path d="M10.500 1.500 1 14l9.500 12.500h3L18 21l-5-7 5-7-4.500-5.500z" /><path d="M17.500 1.500 27 14l-9.500 12.500h-3L11 21l4-5.500h-2l-1-1.500 1-1.500h2L11 7l3.500-5.500z" /><path d="m15 12.500 3-5.500M15 15.500l3 5.500M15 12.500l7-6M15 15.500l7 6M18 14l4-4M18 14l4 4" fill="none" /></g>,
  <g fill="#fafafa" stroke="#0f7ad6" strokeWidth="1.700" strokeLinejoin="round"><path d="M1 2.500h17L27 14l-9 12H1L10 14z" /><path d="M18 2.500 3 22M22 8 8 26M10 14 1 2.500" fill="none" /></g>,
  <g fill="#1a3a6b"><rect x="3" y="10" width="2.200" height="2.200" /><rect x="12" y="10" width="2.200" height="2.200" /><rect x="21" y="10" width="2.200" height="2.200" /></g>,
];

function X({ className = "" }: { className?: string }) {
  return <svg className={`h-3 w-3 ${className}`} viewBox="0 0 12 12"><path d="m.5.5 11 11m0-11-11 11" stroke="#3b3a39" strokeWidth="1.300" /></svg>;
}

function Chevrons({ className = "" }: { className?: string }) {
  return <svg className={`h-[19px] w-[19px] shrink-0 ${className}`} viewBox="0 0 19 19" fill="none" stroke="#3b3a39" strokeWidth="1.500"><path d="m1 .5 8.500 9-8.500 9M9.500.5l8.500 9-8.500 9" /></svg>;
}

function VisualizationsPane() {
  return (
    <section className="flex w-[272px] shrink-0 flex-col overflow-hidden border-x border-[#dcdbda] bg-[#f3f2f1] text-[#323130]">
      <div className="flex h-[60px] pl-[12px] pt-[14px]">
        <div className="w-[227px] text-[22px] font-semibold leading-7 text-[#252423]"><Fit w={149}>Visualizations</Fit></div>
        <Chevrons className="mt-[6px]" />
      </div>
      <div className="h-[26px] pl-[12px] text-[17px] font-medium leading-[18px] text-[#252423]"><Fit w={93}>Build visual</Fit></div>
      <div className="flex h-[48px]">
        <div className="ml-[12px] h-12 w-12 rounded-[3px] bg-[#d2d0ce]">
          <svg className="h-12 w-12" viewBox="0 0 48 48"><path d="M6 7h29" stroke="#111" strokeWidth="1.500" /><path d="M7 15h35v9.500H7zM7 31h35v9.500H7z" fill={GREEN} stroke="#d2d0ce" strokeWidth="2" /><path d="M7 14.500h34.500v10H7zM7 31h34.500v10H7z" fill="none" stroke="#252423" strokeWidth="1.600" strokeDasharray="2.500 1.500" /></svg>
        </div>
        <svg className="ml-[59px] mt-[6px] h-9 w-9" viewBox="0 0 36 36" fill="none" stroke="#252423" strokeWidth="1.700"><path d="M1.500 30V15.500H11M11 27V1.500h9V20M20 10h10" /><path d="M34 13c-4 2-10 8-14 14l3 3c5-4 9-11 11-17zM20 27c-4-1-6 2-7 5-1 2-3 2-5 2 5 3 13 3 15-4z" fill="#f3f2f1" /></svg>
        <svg className="ml-[61px] mt-[5px] h-[37px] w-[37px]" viewBox="0 0 37 37" fill="none" stroke="#252423" strokeWidth="1.700"><circle cx="16" cy="16" r="14.500" /><path d="m3 19 6-5 5 4L28 7M9 28v-7M14 30v-9M19 29v-8M24 26v-9" /><path d="m26 27 9 9" strokeWidth="3.500" /></svg>
      </div>
      <svg className="mt-[7px] h-[13px] w-[270px] shrink-0" viewBox="0 0 270 13" fill="#f3f2f1" stroke="#8a8886" strokeWidth="1.500"><path d="M0 12.300h24L36 .8l12 11.500h222" /></svg>
      <div className="ml-[9px] mt-[9px] grid w-[252px] grid-cols-6 auto-rows-[42px]">
        {visuals.map((v, i) => (
          <div key={i} className="flex items-center justify-center">
            <div className={i === 18 ? "flex h-9 w-9 items-center justify-center border border-[#6b6967] bg-[#e1dfdd]" : "flex"}>
              <svg className="h-7 w-7 overflow-visible" viewBox="0 0 28 28">{v}</svg>
            </div>
          </div>
        ))}
      </div>
      <div className="mt-[6px] flex shrink-0 border-t border-[#dcdbda]">
        <div className="w-[261px] pl-[7px] pt-[13px] text-[17px]">
          <div className="pl-[11px] leading-6"><Fit w={68}>Location</Fit></div>
          <div className="mt-[8px] h-[136px] w-[254px] rounded-[3px] border border-dashed border-[#c8c6c4] bg-white p-[3px]">
            <div className="h-[119px] rounded-[3px] border border-[#bebcba] bg-[#ebeae9] pl-[6px] pr-[6px] leading-[28px]">
              <div className="flex h-[32px] items-center">
                <Fit w={131}>region Hierarchy</Fit>
                <svg className="ml-auto h-[10px] w-[17px]" viewBox="0 0 17 10" fill="none" stroke="#3b3a39" strokeWidth="1.300"><path d="m.5.5 8 8.500 8-8.500" /></svg>
                <X className="ml-[9px]" />
              </div>
              <div className="flex h-[29px] items-center pl-[11px]"><Fit w={51} className="pt-px">region</Fit><X className="ml-auto" /></div>
              <div className="flex h-[28px] items-center pl-[11px]"><Fit w={103}>departement</Fit><X className="ml-auto" /></div>
              <div className="flex h-[28px] items-center pl-[11px]"><Fit w={31}>ville</Fit><X className="ml-auto" /></div>
            </div>
          </div>
          <div className="mt-[17px] pl-[11px] leading-6"><Fit w={58}>Legend</Fit></div>
          <div className="mt-[8px] h-[38px] w-[254px] rounded-t-[3px] border border-b-0 border-dashed border-[#c8c6c4] bg-white pl-[14px] leading-[40px]"><Fit w={160}>Add data fields here</Fit></div>
        </div>
        <div className="mt-[3px] h-[87px] w-[9px] rounded-full bg-[#d0cfce]" />
      </div>
    </section>
  );
}

/* ---------- data pane ---------- */

const calc = <><rect x="1" y="1" width="16" height="19" rx="3" fill="none" stroke="#252423" strokeWidth="1.700" /><rect x="4.500" y="4" width="9" height="4" rx="1" fill="none" stroke="#252423" strokeWidth="1.300" />{[12, 16].map((y) => [5, 9, 13].map((x) => <circle key={`${x}${y}`} cx={x} cy={y} r="1.150" fill="#252423" />))}</>;
const sigma = <path d="M16 4.500V2H2l7 8.500L2 19h14v-2.500" fill="none" stroke="#252423" strokeWidth="1.500" />;
const badge = <><circle cx="18" cy="21.500" r="9" fill={GREEN} /><path d="m14.500 21.500 2.500 2.500 4.500-4.500" fill="none" stroke="#fff" strokeWidth="1.800" /></>;

const fields: [string, number, ("calc" | "sigma" | "tree")?, boolean?][] = [
  ["cp", 18], ["departement", 103], ["Employees", 85, "calc"], ["geolocalisation", 119], ["latitude", 60], ["Libraries", 66, "calc", true], ["longitude", 76],
  ["nombre_de_be...", 130, "sigma"], ["nombre_de_sal...", 131, "sigma"], ["population_co...", 126, "sigma"], ["region", 51], ["region Hierarchy", 131, "tree", true], ["statut", 45],
  ["surface.1", 69, "sigma"], ["ville", 32], ["Volunteers", 83, "calc"],
];

function DataPane() {
  return (
    <section className="w-[251px] shrink-0 overflow-hidden bg-[#f3f2f1] text-[#3b3a39]">
      <div className="flex h-[68px] pl-[12px] pt-[14px]">
        <div className="w-[231px] text-[22px] font-semibold leading-7 text-[#252423]"><Fit w={50}>Data</Fit></div>
        <Chevrons className="mt-[6px]" />
      </div>
      <div className="ml-[6px] flex h-[39px] w-[260px] rounded-[3px] border border-[#6b6967]">
        <svg className="ml-[11px] mt-[7px] h-[23px] w-[23px]" viewBox="0 0 23 23" fill="none" stroke="#55534f" strokeWidth="1.300"><circle cx="14.500" cy="8" r="7" /><path d="M9.500 13 1 22" /></svg>
        <div className="ml-[8px] text-[19px] leading-[40px] text-[#555]"><Fit w={62}>Search</Fit></div>
      </div>
      <div className="flex h-[48px]">
        <svg className="ml-[11px] mt-[25px] h-[11px] w-[17px]" viewBox="0 0 17 11" fill="none" stroke="#605e5c" strokeWidth="1.300"><path d="m.5 1 8 8.500 8-8.500" /></svg>
        <svg className="ml-[7px] mt-[21px] h-[19px] w-[27px] overflow-visible" viewBox="0 0 27 19"><path d="M1 4a3 3 0 0 1 3-3h10a3 3 0 0 1 3 3v10a3 3 0 0 1-3 3H4a3 3 0 0 1-3-3zM1 6h16M1 12h16M6 1v16M12 1v16" fill="none" stroke="#252423" strokeWidth="1.500" /><g transform="translate(0 -3)">{badge}</g></svg>
        <div className="mt-[19px] text-[17px] leading-6 text-[#555]"><Fit w={35}>data</Fit></div>
        <svg className="ml-[132px] mt-[29px] h-[3px] w-[20px] shrink-0" viewBox="0 0 20 3" fill="#605e5c"><circle cx="1.500" cy="1.500" r="1.200" /><circle cx="9.500" cy="1.500" r="1.200" /><circle cx="17.500" cy="1.500" r="1.200" /></svg>
      </div>
      {fields.map(([name, w, icon, on]) => (
        <div key={name} className="flex h-9 items-center pl-[37px]">
          <svg className="h-[18px] w-[10px]" viewBox="0 0 10 18" fill="none" stroke="#605e5c" strokeWidth="1.300">{icon === "tree" && <path d="m.5.5 8.500 8.500-8.500 8.500" />}</svg>
          <div className={`ml-[10px] flex h-[18px] w-[18px] shrink-0 items-center justify-center rounded-[3px] border border-[#797775] ${on ? "bg-[#117865]" : "bg-[#f8f7f7]"}`}>
            {on && <svg className="h-[11px] w-[14px]" viewBox="0 0 14 11"><path d="m1 5.500 4 4 8-8.500" fill="none" stroke="#fff" strokeWidth="1.600" /></svg>}
          </div>
          <svg className="ml-[12px] h-[21px] w-[27px] shrink-0 overflow-visible" viewBox="0 0 27 21">
            {icon === "calc" && calc}
            {icon === "sigma" && sigma}
            {icon === "tree" && <g><path d="M1.500-1h5v5h-5zM4 4v14h5M4 11h6M10 8.500h5v5h-5z" fill="none" stroke="#252423" strokeWidth="1.500" /><g transform="translate(0 -3)">{badge}</g></g>}
          </svg>
          <div className="pt-[2px] text-[17px] leading-6"><Fit w={w}>{name}</Fit></div>
        </div>
      ))}
    </section>
  );
}

/* ---------- status bar ---------- */

function StatusBar() {
  return (
    <footer className="flex h-[29px] shrink-0 overflow-hidden border-t border-[#d8d7d6] bg-[#f3f2f1] text-[#4a4948]">
      <div className="mt-[7px] w-[1595px] text-[17px] leading-6"><Fit w={88}>Page 1 of 1</Fit></div>
      <svg className="mt-[8px] h-[20px] w-[184px]" viewBox="1595 993 184 20" fill="#605e5c">
        <path d="M1596 1001.500h6v2h-6zM1609 1001.500h150v1.200h-150zM1650 994h6v17.500h-6zM1683 998.500h2v7h-2zM1767 1001.500h11v2h-11zM1771.500 997h2v11h-2z" />
      </svg>
      <div className="ml-[20px] mt-[5px] w-[35px] text-[17px] leading-6"><Fit w={34}>63%</Fit></div>
      <svg className="ml-[27px] mt-[9px] h-[19px] w-[26px]" viewBox="0 0 26 19" fill="none" stroke="#55534f" strokeWidth="1.700"><path d="M1.500 1h23v17h-23zM5 7V4.500h3.500M17.500 4.500H21V7M21 12v2.500h-3.500M8.500 14.500H5V12" /></svg>
    </footer>
  );
}

export default function App() {
  return (
    <div className="flex h-[1013px] w-[1894px] flex-col overflow-hidden bg-white font-['Open_Sans','Noto_Sans',sans-serif]">
      <TitleBar />
      <Ribbon />
      <main className="flex h-[744px] shrink-0">
        <LeftRail />
        <div className="w-[1317px] shrink-0">
          <div className="flex">
            <Canvas />
            <FiltersRail />
          </div>
          <PageTabs />
        </div>
        <VisualizationsPane />
        <DataPane />
      </main>
      <StatusBar />
    </div>
  );
}
